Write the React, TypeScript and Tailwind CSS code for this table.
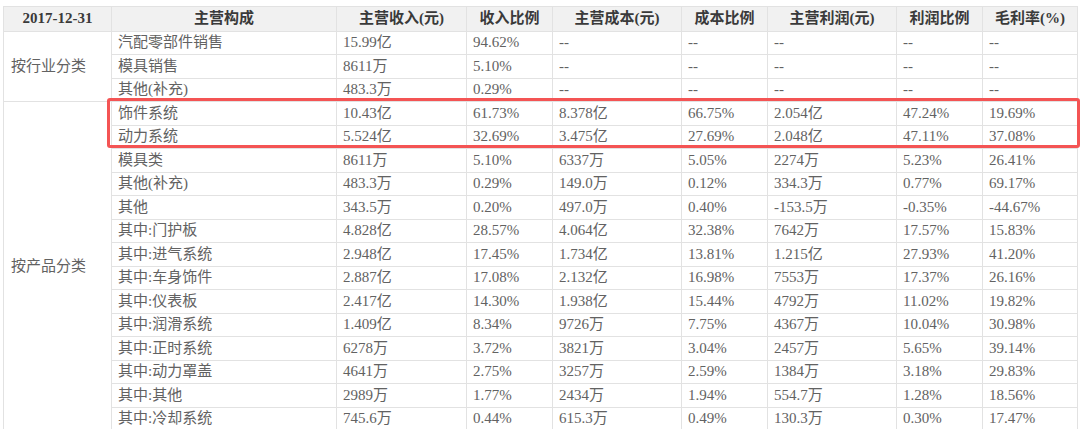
import React from 'react';

type Row = string[];

const industryRows: Row[] = [
  ['汽配零部件销售', '15.99亿', '94.62%', '--', '--', '--', '--', '--'],
  ['模具销售', '8611万', '5.10%', '--', '--', '--', '--', '--'],
  ['其他(补充)', '483.3万', '0.29%', '--', '--', '--', '--', '--'],
];

const productRows: Row[] = [
  ['饰件系统', '10.43亿', '61.73%', '8.378亿', '66.75%', '2.054亿', '47.24%', '19.69%'],
  ['动力系统', '5.524亿', '32.69%', '3.475亿', '27.69%', '2.048亿', '47.11%', '37.08%'],
  ['模具类', '8611万', '5.10%', '6337万', '5.05%', '2274万', '5.23%', '26.41%'],
  ['其他(补充)', '483.3万', '0.29%', '149.0万', '0.12%', '334.3万', '0.77%', '69.17%'],
  ['其他', '343.5万', '0.20%', '497.0万', '0.40%', '-153.5万', '-0.35%', '-44.67%'],
  ['其中:门护板', '4.828亿', '28.57%', '4.064亿', '32.38%', '7642万', '17.57%', '15.83%'],
  ['其中:进气系统', '2.948亿', '17.45%', '1.734亿', '13.81%', '1.215亿', '27.93%', '41.20%'],
  ['其中:车身饰件', '2.887亿', '17.08%', '2.132亿', '16.98%', '7553万', '17.37%', '26.16%'],
  ['其中:仪表板', '2.417亿', '14.30%', '1.938亿', '15.44%', '4792万', '11.02%', '19.82%'],
  ['其中:润滑系统', '1.409亿', '8.34%', '9726万', '7.75%', '4367万', '10.04%', '30.98%'],
  ['其中:正时系统', '6278万', '3.72%', '3821万', '3.04%', '2457万', '5.65%', '39.14%'],
  ['其中:动力罩盖', '4641万', '2.75%', '3257万', '2.59%', '1384万', '3.18%', '29.83%'],
  ['其中:其他', '2989万', '1.77%', '2434万', '1.94%', '554.7万', '1.28%', '18.56%'],
  ['其中:冷却系统', '745.6万', '0.44%', '615.3万', '0.49%', '130.3万', '0.30%', '17.47%'],
];

const headers = ['2017-12-31', '主营构成', '主营收入(元)', '收入比例', '主营成本(元)', '成本比例', '主营利润(元)', '利润比例', '毛利率(%)'];

const cell = 'border border-[#e2e2e2] h-[23.5px] p-0 pl-[6px] text-left align-middle whitespace-nowrap leading-none';

const Group: React.FC<{ label: string; rows: Row[] }> = ({ label, rows }) => (
  <>
    {rows.map((r, i) => (
      <tr key={i}>
        {i === 0 && (
          <td rowSpan={rows.length} className="border border-[#e2e2e2] pl-[7px] text-left align-middle">
            {label}
          </td>
        )}
        {r.map((v, j) => (
          <td key={j} className={cell}>
            {v}
          </td>
        ))}
      </tr>
    ))}
  </>
);

const App: React.FC = () => {
  return (
    <div
      className="relative w-[1080px] h-[429px] overflow-hidden bg-white pt-[6px] pl-[3px] text-[15px] text-[#626262]"
      style={{ fontFamily: '"Liberation Serif", "Noto Sans CJK SC", serif' }}
    >
      <table className="table-fixed border-collapse w-[1074px]">
        <colgroup>
          <col className="w-[108px]" />
          <col className="w-[225px]" />
          <col className="w-[130px]" />
          <col className="w-[86px]" />
          <col className="w-[129px]" />
          <col className="w-[86px]" />
          <col className="w-[129px]" />
          <col className="w-[86px]" />
          <col className="w-[95px]" />
        </colgroup>
        <thead>
          <tr className="bg-[#f1f1f1]">
            {headers.map((h) => (
              <th
                key={h}
                className="border border-[#e2e2e2] h-[24.5px] p-0 text-center font-bold text-[#3a3a3a] whitespace-nowrap leading-none"
              >
                {h}
              </th>
            ))}
          </tr>
        </thead>
        <tbody>
          <Group label="按行业分类" rows={industryRows} />
          <Group label="按产品分类" rows={productRows} />
        </tbody>
      </table>

      {/* highlight box */}
      <div className="absolute left-[107px] top-[98px] w-[973px] h-[50px] border-[3px] border-[#f45454] rounded-[3px] pointer-events-none" />
    </div>
  );
};

export default App;
